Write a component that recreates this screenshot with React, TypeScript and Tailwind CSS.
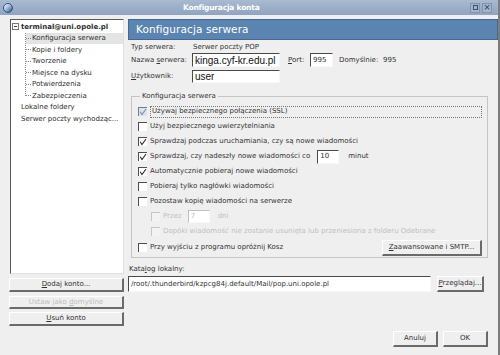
import React from "react";

const Checkbox: React.FC<{ checked?: boolean; disabled?: boolean; soft?: boolean }> = ({ checked, disabled, soft }) => (
  <span
    className={`inline-flex w-[9px] h-[9px] shrink-0 items-center justify-center border-t border-l ${
      disabled ? "border-[#c6c6c6] bg-[#f3f3f3]" : soft ? "border-[#6d7d92] bg-[#dde3ea]" : "border-[#4e4e4e] bg-white"
    }`}
  >
    {checked && (
      <svg width="8" height="8" viewBox="0 0 8 8">
        <path d="M1.2 3.8 L3 6.6 L7 1" fill="none" stroke={soft ? "#7a8ea9" : "#2a2a2a"} strokeWidth="1.1" />
      </svg>
    )}
  </span>
);

const Btn: React.FC<{ children: React.ReactNode; className?: string; disabled?: boolean }> = ({ children, className, disabled }) => (
  <div
    className={`flex items-center justify-center bg-[#efefef] border-t border-l border-t-white border-l-white border-r-2 border-b-2 border-r-[#6a6a6a] border-b-[#6a6a6a] ${
      disabled ? "text-[#bdbdbd]" : "text-[#333]"
    } ${className ?? ""}`}
  >
    {children}
  </div>
);

const Field: React.FC<{ children?: React.ReactNode; className?: string }> = ({ children, className }) => (
  <div
    className={`flex items-center bg-white border-t border-l border-t-[#4a4a4a] border-l-[#4a4a4a] border-b border-r border-b-[#f8f8f8] border-r-[#f8f8f8] pl-[2px] ${className ?? ""}`}
  >
    {children}
  </div>
);

const Row: React.FC<{ children: React.ReactNode; className?: string }> = ({ children, className }) => (
  <div className={`flex items-center h-[15px] gap-[3px] ${className ?? ""}`}>{children}</div>
);

const treeChildren = [
  "Konfiguracja serwera",
  "Kopie i foldery",
  "Tworzenie",
  "Miejsce na dysku",
  "Potwierdzenia",
  "Zabezpieczenia",
];

export default function App() {
  return (
    <div className="w-[500px] h-[355px] bg-[#efefef] flex flex-col overflow-hidden font-['DejaVu_Sans',sans-serif] text-[7px] text-[#333] border-r-2 border-[#7d7d7d]">
      {/* title bar */}
      <div className="h-[15px] shrink-0 flex items-center bg-gradient-to-b from-[#a9bad1] to-[#90a4c1] pl-[3px] pr-[6px]">
        <span className="w-[10px] h-[10px] rounded-full bg-gradient-to-br from-white via-[#9db3d6] to-[#2f4f86] border border-[#34507e]" />
        <span className="ml-[170px] text-white font-bold text-[7.5px] tracking-[-0.2px]">Konfiguracja konta</span>
        <div className="ml-auto flex gap-[2px]">
          <span className="w-[10px] h-[10px] flex items-center justify-center bg-[#a4b5cc] border border-[#7f93b1]">
            <span className="w-[5px] h-[5px] border border-[#3b4e6c]" />
          </span>
          <span className="w-[10px] h-[10px] flex items-center justify-center bg-[#a4b5cc] border border-[#7f93b1] text-[#2c3c58] text-[9px] leading-none">
            ×
          </span>
        </div>
      </div>

      <div className="flex flex-1 pt-[4px]">
        {/* left column */}
        <div className="w-[124px] shrink-0 pl-[9px] flex flex-col">
          <div className="h-[255px] ml-[1px] bg-white border-t border-l border-t-[#5a5a5a] border-l-[#5a5a5a] border-r border-b border-r-[#e0e0e0] border-b-[#e0e0e0] pt-[1px] text-[#2e2e2e]">
            <div className="flex items-center h-[11.5px] pl-[1px] gap-[2px]">
              <span className="w-[7px] h-[7px] border border-[#777] flex items-center justify-center">
                <span className="w-[3px] h-px bg-[#444]" />
              </span>
              <span className="font-bold">terminal@uni.opole.pl</span>
            </div>
            <div className="ml-[14px] flex">
              <span className="w-0 border-l border-dotted border-[#888] mb-[6px]" />
              <div className="flex-1 flex flex-col">
                {treeChildren.map((t, i) => (
                  <div key={t} className={`flex items-center h-[11.5px] shrink-0 ${i === 0 ? "bg-[#e4e4e4]" : ""}`}>
                    <span className="w-[5px] border-t border-dotted border-[#888]" />
                    <span className="pl-[1px]">{t}</span>
                  </div>
                ))}
              </div>
            </div>
            <div className="flex items-center h-[11.5px] pl-[10px]">Lokalne foldery</div>
            <div className="flex items-center h-[11.5px] pl-[10px]">Serwer poczty wychodząc...</div>
          </div>
          <Btn className="h-[14px] mt-[4px]">
            <span>
              <span className="underline">D</span>odaj konto...
            </span>
          </Btn>
          <Btn className="h-[13px] mt-[4px]" disabled>
            <span>
              Ustaw jako <span className="underline">d</span>omyślne
            </span>
          </Btn>
          <Btn className="h-[14px] mt-[3px]">
            <span>
              <span className="underline">U</span>suń konto
            </span>
          </Btn>
        </div>

        {/* right column */}
        <div className="flex-1 ml-[4px] flex flex-col">
          <div className="h-[21px] bg-[#5b84b0] border border-[#44688f] flex items-center pl-[7px] text-white text-[10.5px] tracking-[0.1px]">
            Konfiguracja serwera
          </div>

          <div className="flex items-center h-[11px] mt-[2px] pl-[3px]">
            <span className="w-[62px]">Typ serwera:</span>
            <span>Serwer poczty POP</span>
          </div>
          <div className="flex items-center h-[14px] pl-[3px]">
            <span className="w-[61px]">
              Nazwa <span className="underline">s</span>erwera:
            </span>
            <Field className="w-[88px] h-[14px] font-['Liberation_Sans',sans-serif] text-[10px] text-[#111]">kinga.cyf-kr.edu.pl</Field>
            <span className="ml-[8px] w-[22px]">
              <span className="underline">P</span>ort:
            </span>
            <Field className="w-[23px] h-[14px]">995</Field>
            <span className="ml-[6px] w-[44px]">Domyślnie:</span>
            <span>995</span>
          </div>
          <div className="flex items-center h-[14px] mt-[2px] pl-[3px]">
            <span className="w-[61px]">
              <span className="underline">U</span>żytkownik:
            </span>
            <Field className="w-[88px] h-[13px] font-['Liberation_Sans',sans-serif] text-[10px] text-[#111]">user</Field>
          </div>

          <fieldset className="ml-[3px] mr-[10px] mt-[8px] border border-[#c4c4c4] pl-[6px] pr-[5px] pb-[1px]">
            <legend className="ml-[2px] px-[2px] leading-[10px]">Konfiguracja serwera</legend>
            <div className="pt-[3px]">
              <Row>
                <Checkbox checked soft />
                <span className="flex-1 h-[12px] flex items-center border border-dotted border-[#777] pl-[1px]">
                  Używaj bezpiecznego połączenia (SSL)
                </span>
              </Row>
              <Row>
                <Checkbox />
                <span>Użyj bezpiecznego uwierzytelniania</span>
              </Row>
              <Row>
                <Checkbox checked />
                <span>Sprawdzaj podczas uruchamiania, czy są nowe wiadomości</span>
              </Row>
              <Row>
                <Checkbox checked />
                <span>Sprawdzaj, czy nadeszły nowe wiadomości co</span>
                <Field className="w-[22px] h-[14px] ml-[4px]">10</Field>
                <span className="ml-[6px]">minut</span>
              </Row>
              <Row>
                <Checkbox checked />
                <span>Automatycznie pobieraj nowe wiadomości</span>
              </Row>
              <Row>
                <Checkbox />
                <span>Pobieraj tylko nagłówki wiadomości</span>
              </Row>
              <Row>
                <Checkbox />
                <span>Pozostaw kopię wiadomości na serwerze</span>
              </Row>
              <Row className="pl-[13px] text-[#c0c0c0]">
                <Checkbox disabled />
                <span>Przez</span>
                <Field className="w-[22px] h-[13px] ml-[3px] border-t-[#c0c0c0] border-l-[#c0c0c0] bg-[#f7f7f7]">7</Field>
                <span className="ml-[5px]">dni</span>
              </Row>
              <Row className="pl-[13px] text-[#c0c0c0]">
                <Checkbox disabled />
                <span>Dopóki wiadomość nie zostanie usunięta lub przeniesiona z folderu Odebrane</span>
              </Row>
              <div className="flex items-center h-[17px] gap-[3px]">
                <Checkbox />
                <span>Przy wyjściu z programu opróżnij Kosz</span>
                <Btn className="ml-auto w-[100px] h-[16px]">
                  <span>
                    <span className="underline">Z</span>aawansowane i SMTP...
                  </span>
                </Btn>
              </div>
            </div>
          </fieldset>

          <div className="flex items-center h-[11px] mt-[6px] pl-[1px]">
            Kata<span className="underline">l</span>og lokalny:
          </div>
          <div className="flex items-center h-[16px] mt-[1px]">
            <Field className="w-[303px] h-[16px]">/root/.thunderbird/kzpcg84j.default/Mail/pop.uni.opole.pl</Field>
            <Btn className="ml-[6px] w-[47px] h-[16px]">
              <span>
                <span className="underline">P</span>rzeglądaj...
              </span>
            </Btn>
          </div>

          <div className="flex justify-end gap-[5px] mt-auto mb-[8px] mr-[10px]">
            <Btn className="w-[45px] h-[16px]">Anuluj</Btn>
            <Btn className="w-[45px] h-[16px]">OK</Btn>
          </div>
        </div>
      </div>
    </div>
  );
}
